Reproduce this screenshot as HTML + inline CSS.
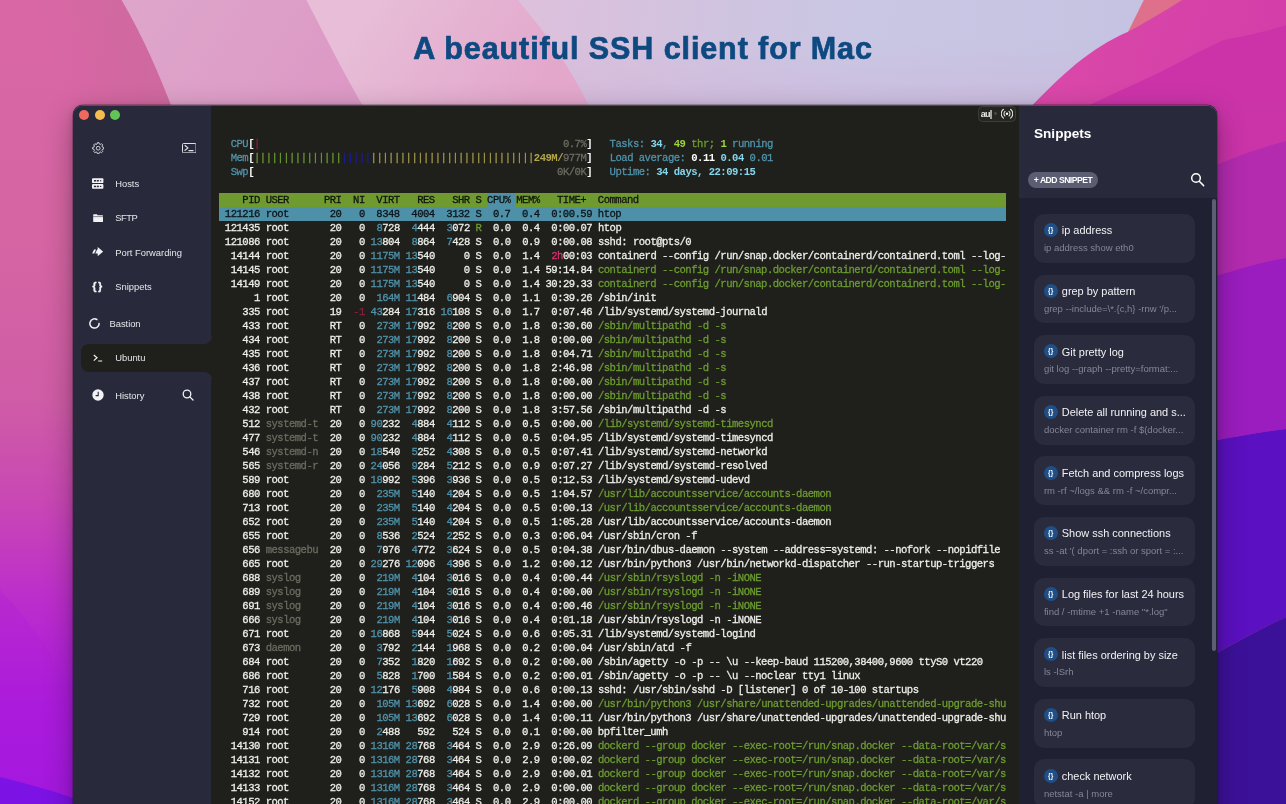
<!DOCTYPE html>
<html><head><meta charset="utf-8"><title>SSH client</title>
<style>
html,body{margin:0;padding:0}
body{width:1286px;height:804px;overflow:hidden;position:relative;background:#c9c3df;font-family:"Liberation Sans",sans-serif;}
#bg{position:absolute;left:0;top:0;width:1286px;height:804px;display:block}
.title{position:absolute;left:0;top:28px;width:1286px;text-align:center;font-weight:bold;font-size:30.5px;line-height:40px;color:#0e4a80;white-space:nowrap;letter-spacing:.9px;-webkit-text-stroke:.7px #0e4a80}
.win{position:absolute;left:73px;top:105px;width:1144px;height:720px;border-radius:10px;overflow:hidden;background:#1f1f1b;box-shadow:0 0 0 0.5px rgba(20,20,30,.5),0 10px 30px rgba(0,0,0,.32),0 2px 8px rgba(0,0,0,.18)}
.win,.title{will-change:transform}
.win::after{content:"";position:absolute;left:0;top:0;right:0;bottom:0;border-radius:10px;box-shadow:inset 0 .7px 0 rgba(255,255,255,.26);pointer-events:none;z-index:9}
.side{position:absolute;left:0;top:0;width:139.4px;height:720px;background:#282a3c;box-shadow:inset -1px 0 0 rgba(8,8,20,.32)}
.tl{position:absolute;top:5.2px;width:10px;height:10px;border-radius:50%}
.nav{position:absolute;left:42.2px;font-size:9.4px;line-height:12px;color:#e6e6ea;white-space:nowrap}
.ico{position:absolute;display:block}
.tab{position:absolute;left:8px;top:239px;width:132px;height:28px;background:#1f1f1b;border-radius:8px 0 0 8px}
.tabc{position:absolute;left:131.4px;width:8.6px;height:8px;background:#1f1f1b}
.tabc i{position:absolute;left:0;top:0;width:8px;height:8px;background:#282a3c;display:block}
.term{position:absolute;left:146px;top:4px;width:790px;height:716px;transform:scaleY(1.076923);transform-origin:0 0;font-family:"Liberation Mono",monospace;font-size:10.6px;letter-spacing:-0.529px;color:#eeeeea;-webkit-text-stroke:.28px currentColor}
.l{height:13px;line-height:13px;white-space:pre;width:787.3px}
.l i{font-style:normal}
.l b{font-weight:bold;color:#fff;-webkit-text-stroke:0}
.hdr{color:#10140c}
.hbar{position:absolute;left:146px;top:88px;width:787.3px;height:14px;background:linear-gradient(90deg,#6f9a30 0,#6f9a30 268.3px,#4e90a8 268.3px,#4e90a8 297.4px,#6f9a30 297.4px)}
.sbar{position:absolute;left:146px;top:102px;width:787.3px;height:14px;background:#4e90a8}
.sel{color:#0c1418}
.t{color:#4f93ab}.g{color:#6c9c31}.d{color:#6b6c60}.r{color:#8c1f3c}.p{color:#d4336e}.bl{color:#1d1d9c}.y{color:#a69c48}
.l b.c{color:#84d6ee}.l b.G{color:#9fd43a}.l .y b{color:#b3a84a}
.badge{position:absolute;left:905.1px;top:1.4px;width:37.7px;height:15.6px;border:1px solid #3c3d37;border-radius:4.5px;background:#252622;box-sizing:border-box}
.snip{position:absolute;left:946px;top:0;width:198px;height:720px;background:#1f2133}
.shead{position:absolute;left:0;top:0;width:198px;height:93px;background:#282a3c}
.stitle{position:absolute;left:15px;top:20.4px;font-weight:bold;font-size:13.6px;line-height:17px;color:#fff}
.add{position:absolute;left:9px;top:67px;width:70px;height:16px;border-radius:8px;background:#5b5d72;color:#fff;font-weight:bold;font-size:8.6px;letter-spacing:-.5px;line-height:17px;text-align:center;white-space:nowrap}
.card{position:absolute;left:15.3px;width:160.8px;height:48.9px;border-radius:10px;background:#2a2b3c}
.cic{position:absolute;left:9.4px;top:9.2px;width:14px;height:14px;border-radius:50%;background:#1f4f86;color:#fff;font-weight:bold;font-size:6.5px;line-height:13.8px;text-align:center;letter-spacing:.3px;text-indent:.3px}
.ct{position:absolute;left:27.5px;top:9.4px;font-size:10.95px;line-height:15px;color:#f2f2f5;white-space:nowrap}
.cs{position:absolute;left:9.6px;top:28.3px;font-size:9.5px;line-height:12px;color:#84869a;white-space:nowrap}
.sb{position:absolute;left:193.2px;top:94px;width:3.4px;height:451.500px;border-radius:2px;background:#5c5e73}
</style></head>
<body>
<svg id="bg" width="1286" height="804" viewBox="0 0 1286 804">
<defs>
<linearGradient id="lav" gradientUnits="userSpaceOnUse" x1="540" y1="0" x2="1140" y2="60"><stop offset="0" stop-color="#dcc0dc"/><stop offset="0.3" stop-color="#d0c4e0"/><stop offset="0.55" stop-color="#c9c7e4"/><stop offset="1" stop-color="#c5c3e1"/></linearGradient>
<linearGradient id="lav2" gradientUnits="userSpaceOnUse" x1="0" y1="40" x2="0" y2="110"><stop offset="0" stop-color="#d0b0d8" stop-opacity="0"/><stop offset="1" stop-color="#d0b0d8" stop-opacity=".45"/></linearGradient>
<linearGradient id="p3" gradientUnits="userSpaceOnUse" x1="380" y1="0" x2="520" y2="110"><stop offset="0" stop-color="#e7bdd7"/><stop offset="1" stop-color="#e3a7cc"/></linearGradient>
<linearGradient id="p2" gradientUnits="userSpaceOnUse" x1="160" y1="0" x2="330" y2="110"><stop offset="0" stop-color="#dea4ca"/><stop offset="1" stop-color="#dc99c5"/></linearGradient>
<linearGradient id="left" gradientUnits="userSpaceOnUse" x1="0" y1="0" x2="0" y2="804"><stop offset="0" stop-color="#d967a6"/><stop offset="0.3" stop-color="#d565a3"/><stop offset="0.5" stop-color="#cf5ca6"/><stop offset="0.62" stop-color="#c948b4"/><stop offset="0.75" stop-color="#bc2dcc"/><stop offset="0.88" stop-color="#a919de"/><stop offset="1" stop-color="#9d14e4"/></linearGradient>
<linearGradient id="lsh" gradientUnits="userSpaceOnUse" x1="60" y1="70" x2="150" y2="35"><stop offset="0" stop-color="#b8708f" stop-opacity="0"/><stop offset="1" stop-color="#b8708f" stop-opacity=".3"/></linearGradient>
<linearGradient id="mag" gradientUnits="userSpaceOnUse" x1="1060" y1="40" x2="1286" y2="110"><stop offset="0" stop-color="#da48a8"/><stop offset="1" stop-color="#d23ca9"/></linearGradient>
</defs>
<rect width="1286" height="804" fill="url(#lav)"/>
<rect x="560" width="600" height="110" fill="url(#lav2)"/>
<path d="M0 0H517.6C547.700 35 571.800 70 591 110V804H0Z" fill="url(#p3)"/>
<path d="M0 0H306.300C325.500 37 343.700 73 365.200 110V804H0Z" fill="url(#p2)"/>
<path d="M0 0H121.500C143 37 158.700 73 172.800 110V804H0Z" fill="url(#left)"/>
<path d="M40 0H121.500C143 37 158.700 73 172.800 110H40Z" fill="url(#lsh)"/>
<path d="M0 590C30 620 55 660 80 700V804H0Z" fill="#b01fd6" opacity=".35"/>
<path d="M0 777C25 783 50 790 76 799V804H0Z" fill="#7c12e4"/>
<path d="M1143.800 0H1200V14L1130 33L1128.100 31.700Z" fill="#df708c"/>
<path d="M1182 0H1286V804H1200V110H1028C1061 75 1091.200 47.300 1128.100 31.700C1146 22 1165 11 1182 0Z" fill="url(#mag)"/>
<path d="M1286 25C1262 33 1245 36 1224 40C1205 48 1190 57 1177 63.500C1150 78 1120 90 1080 110H1286Z" fill="#cc33a9"/>
<path d="M1200 100H1286V141C1260 148 1235 156 1200 172Z" fill="#cb33a9"/>
<path d="M1200 172C1235 156 1260 148 1286 141V258C1260 262 1235 270 1200 281Z" fill="#b42bb0"/>
<path d="M1200 281C1235 270 1260 262 1286 258V429C1260 432 1235 437 1200 443Z" fill="#9b1dbf"/>
<path d="M1200 443C1235 437 1260 432 1286 429V617C1262 628 1240 640 1200 662Z" fill="#5b10c1"/>
<path d="M1200 662C1240 640 1262 628 1286 617V804H1200Z" fill="#3c1199"/>
</svg>

<div class="title">A beautiful SSH client for Mac</div>
<div class="win">
<div class="side">
<div class="tl" style="left:5.9px;background:#ee6a5e"></div>
<div class="tl" style="left:21.5px;background:#f5bd4f"></div>
<div class="tl" style="left:36.8px;background:#61c454"></div>
<svg class="ico" style="left:18.65px;top:36.7px" width="12.4" height="12.4" viewBox="0 0 12.4 12.4" fill="none" stroke="#d2d3dc" stroke-width="1" stroke-linejoin="round"><circle cx="6.2" cy="6.2" r="1.9"/><path d="M5.11 1.99 L5.37 0.66 L7.03 0.66 L7.29 1.99 L8.41 2.45 L9.53 1.70 L10.70 2.87 L9.95 3.99 L10.41 5.11 L11.74 5.37 L11.74 7.03 L10.41 7.29 L9.95 8.41 L10.70 9.53 L9.53 10.70 L8.41 9.95 L7.29 10.41 L7.03 11.74 L5.37 11.74 L5.11 10.41 L3.99 9.95 L2.87 10.70 L1.70 9.53 L2.45 8.41 L1.99 7.29 L0.66 7.03 L0.66 5.37 L1.99 5.11 L2.45 3.99 L1.70 2.87 L2.87 1.70 L3.99 2.45Z"/></svg>
<svg class="ico" style="left:108.8px;top:37.7px" width="14.6" height="10.4" viewBox="0 0 14.6 10.4" fill="none" stroke="#e4e4ea" stroke-width="1"><rect x=".5" y=".5" width="13.6" height="9.4" rx="1.1"/><path d="M3 2.5l3 2.400L3 7.300M6.900 7.600h4.200" stroke-width="1.150" stroke-linecap="round" stroke-linejoin="round"/></svg>
<svg class="ico" style="left:19.3px;top:73px" width="11.4" height="11.2" viewBox="0 0 12 11"><rect x="0" y="0" width="12" height="5" rx="1" fill="#f2f2f5"/><rect x="0" y="6" width="12" height="5" rx="1" fill="#f2f2f5"/><rect x="2" y="1.7" width="2.2" height="1.6" fill="#282a3c"/><rect x="5" y="1.7" width="2.2" height="1.6" fill="#282a3c"/><rect x="8.3" y="1.9" width="1.5" height="1.2" fill="#282a3c"/><rect x="2" y="7.7" width="2.2" height="1.6" fill="#282a3c"/><rect x="5" y="7.7" width="2.2" height="1.6" fill="#282a3c"/><rect x="8.3" y="7.9" width="1.5" height="1.2" fill="#282a3c"/></svg>
<div class="nav" style="top:73px">Hosts</div>
<svg class="ico" style="left:19.8px;top:109px" width="10.4" height="8.2" viewBox="0 0 11 9"><path d="M0 1.2Q0 .3 .9.3H4l1 1.2H10.1Q11 1.5 11 2.4V8q0 .9-.9.9H.9Q0 8.9 0 8Z" fill="#f2f2f5"/><path d="M0 2.9H11" stroke="#282a3c" stroke-width=".6"/></svg>
<div class="nav" style="top:107.1px;letter-spacing:-.45px">SFTP</div>
<svg class="ico" style="left:19px;top:142.100px" width="11.400" height="9.200" viewBox="0 0 12 10"><path d="M6 0L12 5 6 10V7.2H3.400L5.400 2.800H6Z" fill="#f2f2f5"/><path d="M0 7.2L2 2.800H4.200L2.200 7.2Z" fill="#f2f2f5"/></svg>
<div class="nav" style="top:141.7px">Port Forwarding</div>
<div class="nav" style="left:19.400px;top:175.700px;font-weight:bold;font-size:10px;letter-spacing:1.900px;color:#f4f4f6;-webkit-text-stroke:.4px #f4f4f6">{}</div>
<div class="nav" style="top:176px">Snippets</div>
<svg class="ico" style="left:16.4px;top:213.4px" width="11" height="11" viewBox="0 0 11 11" fill="none"><circle cx="5.5" cy="5.5" r="4.6" stroke="#3a3c50" stroke-width="1.3"/><path d="M7.8 1.500A4.600 4.600 0 1 0 10.100 5.500" stroke="#f2f2f5" stroke-width="1.500" stroke-linecap="round"/></svg>
<div class="nav" style="left:36.600px;top:212.9px;letter-spacing:-.05px">Bastion</div>
<div class="tabc" style="top:231px"><i style="border-radius:0 0 8px 0"></i></div>
<div class="tab"></div>
<div class="tabc" style="top:267px"><i style="border-radius:0 8px 0 0"></i></div>
<svg class="ico" style="left:20px;top:248.5px" width="10" height="8" viewBox="0 0 10 8" fill="none" stroke="#f2f2f5" stroke-width="1.2"><path d="M.8 1l3.200 2.800L.8 6.600M5.200 7h4"/></svg>
<div class="nav" style="top:246.9px">Ubuntu</div>
<svg class="ico" style="left:19px;top:284.4px" width="12" height="12" viewBox="0 0 12 12"><circle cx="6" cy="6" r="5.700" fill="#f2f2f5"/><path d="M6.200 2.800V6.600H3.600" fill="none" stroke="#282a3c" stroke-width="1.100"/></svg>
<div class="nav" style="top:284.8px">History</div>
<svg class="ico" style="left:108.8px;top:284.4px" width="12" height="12" viewBox="0 0 12 12" fill="none" stroke="#f2f2f5" stroke-width="1.300" stroke-linecap="round"><circle cx="5" cy="5" r="3.800"/><path d="M7.900 7.900L11 11"/></svg>
</div>

<div class="hbar"></div><div class="sbar"></div>
<div class="term">
<div class="l"> </div><div class="l"> </div><div class="l">  <i class="t">CPU</i><b>[</b><i class="r">|</i>                                                    <i class="d">0.7%</i><b>]</b>   <i class="t">Tasks: </i><b class="c">34</b><i class="t">, </i><b class="G">49</b><i class="g"> thr; </i><b class="G">1</b><i class="t"> running</i></div><div class="l">  <i class="t">Mem</i><b>[</b><i class="g">|||||||||||||||</i><i class="bl">|||||</i><i class="y">||||||||||||||||||||||||||||<b>249M/</b></i><i class="d">977M</i><b>]</b>   <i class="t">Load average: </i><b>0.11</b> <b class="c">0.04</b> <i class="t">0.01</i></div><div class="l">  <i class="t">Swp</i><b>[</b>                                                    <i class="d">0K/0K</i><b>]</b>   <i class="t">Uptime: </i><b class="c">34 days, 22:09:15</b></div><div class="l"> </div><div class="l hdr">    PID USER      PRI  NI  VIRT   RES   SHR S CPU% MEM%   TIME+  Command</div><div class="l sel"> 121216 root       20   0  8348  4004  3132 S  0.7  0.4  0:00.59 htop</div><div class="l"> 121435 root       20   0  <i class="t">8</i>728  <i class="t">4</i>444  <i class="t">3</i>072 <i class="g">R</i>  0.0  0.4  0:00.07 htop</div><div class="l"> 121086 root       20   0 <i class="t">13</i>804  <i class="t">8</i>864  <i class="t">7</i>428 S  0.0  0.9  0:00.08 sshd: root@pts/0</div><div class="l">  14144 root       20   0 <i class="t">1175M</i> <i class="t">13</i>540     0 S  0.0  1.4  <i class="p">2h</i>00:03 containerd --config /run/snap.docker/containerd/containerd.toml --log-</div><div class="l">  14145 root       20   0 <i class="t">1175M</i> <i class="t">13</i>540     0 S  0.0  1.4 59:14.84 <i class="g">containerd --config /run/snap.docker/containerd/containerd.toml --log-</i></div><div class="l">  14149 root       20   0 <i class="t">1175M</i> <i class="t">13</i>540     0 S  0.0  1.4 30:29.33 <i class="g">containerd --config /run/snap.docker/containerd/containerd.toml --log-</i></div><div class="l">      1 root       20   0  <i class="t">164M</i> <i class="t">11</i>484  <i class="t">6</i>904 S  0.0  1.1  0:39.26 /sbin/init</div><div class="l">    335 root       19  <i class="r">-1</i> <i class="t">43</i>284 <i class="t">17</i>316 <i class="t">16</i>108 S  0.0  1.7  0:07.46 /lib/systemd/systemd-journald</div><div class="l">    433 root       RT   0  <i class="t">273M</i> <i class="t">17</i>992  <i class="t">8</i>200 S  0.0  1.8  0:30.60 <i class="g">/sbin/multipathd -d -s</i></div><div class="l">    434 root       RT   0  <i class="t">273M</i> <i class="t">17</i>992  <i class="t">8</i>200 S  0.0  1.8  0:00.00 <i class="g">/sbin/multipathd -d -s</i></div><div class="l">    435 root       RT   0  <i class="t">273M</i> <i class="t">17</i>992  <i class="t">8</i>200 S  0.0  1.8  0:04.71 <i class="g">/sbin/multipathd -d -s</i></div><div class="l">    436 root       RT   0  <i class="t">273M</i> <i class="t">17</i>992  <i class="t">8</i>200 S  0.0  1.8  2:46.98 <i class="g">/sbin/multipathd -d -s</i></div><div class="l">    437 root       RT   0  <i class="t">273M</i> <i class="t">17</i>992  <i class="t">8</i>200 S  0.0  1.8  0:00.00 <i class="g">/sbin/multipathd -d -s</i></div><div class="l">    438 root       RT   0  <i class="t">273M</i> <i class="t">17</i>992  <i class="t">8</i>200 S  0.0  1.8  0:00.00 <i class="g">/sbin/multipathd -d -s</i></div><div class="l">    432 root       RT   0  <i class="t">273M</i> <i class="t">17</i>992  <i class="t">8</i>200 S  0.0  1.8  3:57.56 /sbin/multipathd -d -s</div><div class="l">    512 <i class="d">systemd-t</i>  20   0 <i class="t">90</i>232  <i class="t">4</i>884  <i class="t">4</i>112 S  0.0  0.5  0:00.00 <i class="g">/lib/systemd/systemd-timesyncd</i></div><div class="l">    477 <i class="d">systemd-t</i>  20   0 <i class="t">90</i>232  <i class="t">4</i>884  <i class="t">4</i>112 S  0.0  0.5  0:04.95 /lib/systemd/systemd-timesyncd</div><div class="l">    546 <i class="d">systemd-n</i>  20   0 <i class="t">18</i>540  <i class="t">5</i>252  <i class="t">4</i>308 S  0.0  0.5  0:07.41 /lib/systemd/systemd-networkd</div><div class="l">    565 <i class="d">systemd-r</i>  20   0 <i class="t">24</i>056  <i class="t">9</i>284  <i class="t">5</i>212 S  0.0  0.9  0:07.27 /lib/systemd/systemd-resolved</div><div class="l">    589 root       20   0 <i class="t">18</i>992  <i class="t">5</i>396  <i class="t">3</i>936 S  0.0  0.5  0:12.53 /lib/systemd/systemd-udevd</div><div class="l">    680 root       20   0  <i class="t">235M</i>  <i class="t">5</i>140  <i class="t">4</i>204 S  0.0  0.5  1:04.57 <i class="g">/usr/lib/accountsservice/accounts-daemon</i></div><div class="l">    713 root       20   0  <i class="t">235M</i>  <i class="t">5</i>140  <i class="t">4</i>204 S  0.0  0.5  0:00.13 <i class="g">/usr/lib/accountsservice/accounts-daemon</i></div><div class="l">    652 root       20   0  <i class="t">235M</i>  <i class="t">5</i>140  <i class="t">4</i>204 S  0.0  0.5  1:05.28 /usr/lib/accountsservice/accounts-daemon</div><div class="l">    655 root       20   0  <i class="t">8</i>536  <i class="t">2</i>524  <i class="t">2</i>252 S  0.0  0.3  0:06.04 /usr/sbin/cron -f</div><div class="l">    656 <i class="d">messagebu</i>  20   0  <i class="t">7</i>976  <i class="t">4</i>772  <i class="t">3</i>624 S  0.0  0.5  0:04.38 /usr/bin/dbus-daemon --system --address=systemd: --nofork --nopidfile</div><div class="l">    665 root       20   0 <i class="t">29</i>276 <i class="t">12</i>096  <i class="t">4</i>396 S  0.0  1.2  0:00.12 /usr/bin/python3 /usr/bin/networkd-dispatcher --run-startup-triggers</div><div class="l">    688 <i class="d">syslog   </i>  20   0  <i class="t">219M</i>  <i class="t">4</i>104  <i class="t">3</i>016 S  0.0  0.4  0:00.44 <i class="g">/usr/sbin/rsyslogd -n -iNONE</i></div><div class="l">    689 <i class="d">syslog   </i>  20   0  <i class="t">219M</i>  <i class="t">4</i>104  <i class="t">3</i>016 S  0.0  0.4  0:00.00 <i class="g">/usr/sbin/rsyslogd -n -iNONE</i></div><div class="l">    691 <i class="d">syslog   </i>  20   0  <i class="t">219M</i>  <i class="t">4</i>104  <i class="t">3</i>016 S  0.0  0.4  0:00.46 <i class="g">/usr/sbin/rsyslogd -n -iNONE</i></div><div class="l">    666 <i class="d">syslog   </i>  20   0  <i class="t">219M</i>  <i class="t">4</i>104  <i class="t">3</i>016 S  0.0  0.4  0:01.18 /usr/sbin/rsyslogd -n -iNONE</div><div class="l">    671 root       20   0 <i class="t">16</i>868  <i class="t">5</i>944  <i class="t">5</i>024 S  0.0  0.6  0:05.31 /lib/systemd/systemd-logind</div><div class="l">    673 <i class="d">daemon   </i>  20   0  <i class="t">3</i>792  <i class="t">2</i>144  <i class="t">1</i>968 S  0.0  0.2  0:00.04 /usr/sbin/atd -f</div><div class="l">    684 root       20   0  <i class="t">7</i>352  <i class="t">1</i>820  <i class="t">1</i>692 S  0.0  0.2  0:00.00 /sbin/agetty -o -p -- \u --keep-baud 115200,38400,9600 ttyS0 vt220</div><div class="l">    686 root       20   0  <i class="t">5</i>828  <i class="t">1</i>700  <i class="t">1</i>584 S  0.0  0.2  0:00.01 /sbin/agetty -o -p -- \u --noclear tty1 linux</div><div class="l">    716 root       20   0 <i class="t">12</i>176  <i class="t">5</i>908  <i class="t">4</i>984 S  0.0  0.6  0:00.13 sshd: /usr/sbin/sshd -D [listener] 0 of 10-100 startups</div><div class="l">    732 root       20   0  <i class="t">105M</i> <i class="t">13</i>692  <i class="t">6</i>028 S  0.0  1.4  0:00.00 <i class="g">/usr/bin/python3 /usr/share/unattended-upgrades/unattended-upgrade-shu</i></div><div class="l">    729 root       20   0  <i class="t">105M</i> <i class="t">13</i>692  <i class="t">6</i>028 S  0.0  1.4  0:00.11 /usr/bin/python3 /usr/share/unattended-upgrades/unattended-upgrade-shu</div><div class="l">    914 root       20   0  <i class="t">2</i>488   592   524 S  0.0  0.1  0:00.00 bpfilter_umh</div><div class="l">  14130 root       20   0 <i class="t">1316M</i> <i class="t">28</i>768  <i class="t">3</i>464 S  0.0  2.9  0:26.09 <i class="g">dockerd --group docker --exec-root=/run/snap.docker --data-root=/var/s</i></div><div class="l">  14131 root       20   0 <i class="t">1316M</i> <i class="t">28</i>768  <i class="t">3</i>464 S  0.0  2.9  0:00.02 <i class="g">dockerd --group docker --exec-root=/run/snap.docker --data-root=/var/s</i></div><div class="l">  14132 root       20   0 <i class="t">1316M</i> <i class="t">28</i>768  <i class="t">3</i>464 S  0.0  2.9  0:00.01 <i class="g">dockerd --group docker --exec-root=/run/snap.docker --data-root=/var/s</i></div><div class="l">  14133 root       20   0 <i class="t">1316M</i> <i class="t">28</i>768  <i class="t">3</i>464 S  0.0  2.9  0:00.00 <i class="g">dockerd --group docker --exec-root=/run/snap.docker --data-root=/var/s</i></div><div class="l">  14152 root       20   0 <i class="t">1316M</i> <i class="t">28</i>768  <i class="t">3</i>464 S  0.0  2.9  0:00.00 <i class="g">dockerd --group docker --exec-root=/run/snap.docker --data-root=/var/s</i></div>
</div>
<div class="badge"><div style="position:absolute;left:1.6px;top:.5px;font:bold 9px/12px 'Liberation Sans',sans-serif;letter-spacing:-.7px;color:#ecece8">au|</div><div style="position:absolute;left:15.1px;top:5.1px;width:2.9px;height:2.9px;border-radius:50%;background:#484942"></div>
<svg class="ico" style="left:21.7px;top:1.1px" width="12" height="11.4" viewBox="0 0 12 11.4" fill="none" stroke="#e4e4e0" stroke-width="1.05" stroke-linecap="round"><circle cx="6" cy="5.7" r="1.2" fill="#fff" stroke="none"/><path d="M4 3.4a3.1 3.1 0 0 0 0 4.600M8 3.400a3.100 3.100 0 0 1 0 4.600M2.500 1.300a5.400 5.400 0 0 0 0 8.800M9.500 1.300a5.400 5.400 0 0 1 0 8.800"/></svg></div>
<div class="snip">
<div class="shead"><div class="stitle">Snippets</div><div class="add">+ ADD SNIPPET</div>
<svg class="ico" style="left:171px;top:66.600px" width="15" height="15" viewBox="0 0 15 15" fill="none" stroke="#fff" stroke-width="1.500" stroke-linecap="round"><circle cx="6" cy="6" r="4.300"/><path d="M9.300 9.300L13.600 13.600"/></svg>
</div>
<div class="card" style="top:109.0px"><div class="cic">{}</div><div class="ct">ip address</div><div class="cs">ip address show eth0</div></div>
<div class="card" style="top:169.6px"><div class="cic">{}</div><div class="ct">grep by pattern</div><div class="cs">grep --include=\*.{c,h} -rnw '/p...</div></div>
<div class="card" style="top:230.2px"><div class="cic">{}</div><div class="ct">Git pretty log</div><div class="cs">git log --graph --pretty=format:...</div></div>
<div class="card" style="top:290.8px"><div class="cic">{}</div><div class="ct">Delete all running and s...</div><div class="cs">docker container rm -f $(docker...</div></div>
<div class="card" style="top:351.4px"><div class="cic">{}</div><div class="ct">Fetch and compress logs</div><div class="cs">rm -rf ~/logs &amp;&amp; rm -f ~/compr...</div></div>
<div class="card" style="top:412.0px"><div class="cic">{}</div><div class="ct">Show ssh connections</div><div class="cs">ss -at '( dport = :ssh or sport = :...</div></div>
<div class="card" style="top:472.6px"><div class="cic">{}</div><div class="ct">Log files for last 24 hours</div><div class="cs">find / -mtime +1 -name "*.log"</div></div>
<div class="card" style="top:533.2px"><div class="cic">{}</div><div class="ct">list files ordering by size</div><div class="cs">ls -lSrh</div></div>
<div class="card" style="top:593.8px"><div class="cic">{}</div><div class="ct">Run htop</div><div class="cs">htop</div></div>
<div class="card" style="top:654.4px"><div class="cic">{}</div><div class="ct">check network</div><div class="cs">netstat -a | more</div></div>
<div class="sb"></div>
</div>
</div>
</body></html>
